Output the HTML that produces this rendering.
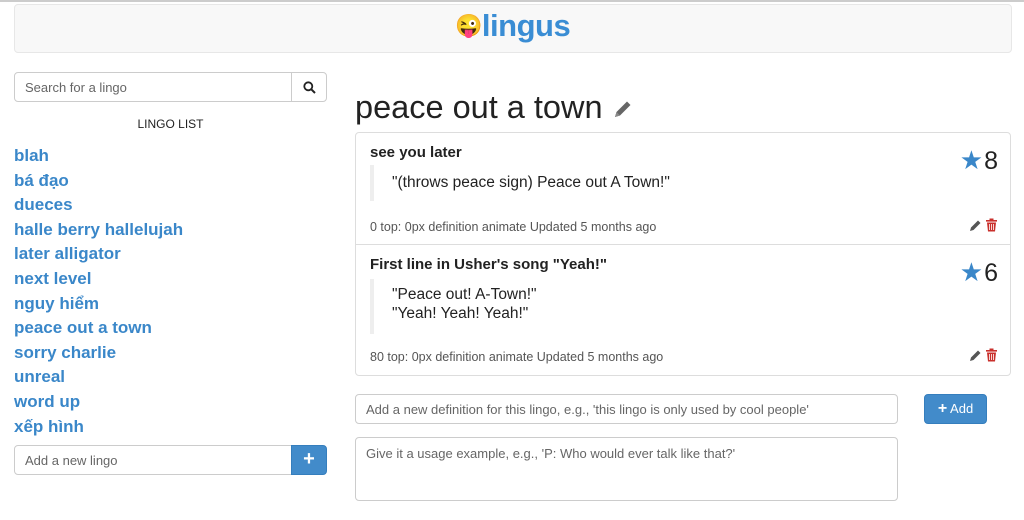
<!DOCTYPE html>
<html><head><meta charset="utf-8"><style>
*{box-sizing:border-box}
body{margin:0;width:1024px;height:520px;overflow:hidden;background:#fff;font-family:"Liberation Sans",sans-serif;color:#333;position:relative}
.abs{position:absolute}
.nav{left:14px;top:4px;width:998px;height:49px;background:#f8f8f8;border:1px solid #e7e7e7;border-radius:4px}
.logo{left:455px;top:8px;font-size:31px;font-weight:bold;color:#3a8dd4;letter-spacing:-0.5px}
.inp{border:1px solid #ccc;border-radius:4px;font-size:13px;color:#666;padding:0 10px;display:flex;align-items:center;background:#fff}
.list a{display:block;color:#3a87c9;font-weight:bold;font-size:17px;height:24.6px;line-height:24px;text-decoration:none}
.panel{left:355px;top:132px;width:656px;border:1px solid #ddd;border-radius:4px}
.item{position:relative;padding:0 14px;border-bottom:1px solid #ddd}
.item:last-child{border-bottom:0}
.h{font-size:15px;font-weight:bold;color:#222;position:absolute;left:14px;top:11px}
.bq{position:absolute;left:14px;border-left:4px solid #eee;padding-left:18px;font-size:15.5px;color:#222;line-height:19px}
.ft{position:absolute;left:14px;font-size:12.5px;color:#555}
.st{position:absolute;right:12px;font-size:25px;color:#222}
.st span{color:#3a87c9;font-size:26px;margin-right:1px}
.icons{position:absolute;right:12px}
</style></head><body>
<div class="abs" style="left:0;top:0;width:1024px;height:2px;background:#ccc"></div>
<div class="abs nav"></div>
<div class="abs logo"><span style="font-size:22px;vertical-align:3px">😜</span>lingus</div>

<div class="abs inp" style="left:14px;top:72px;width:278px;height:30px;border-radius:4px 0 0 4px">Search for a lingo</div>
<div class="abs inp" style="left:291px;top:72px;width:36px;height:30px;border-radius:0 4px 4px 0;justify-content:center">
<svg width="13" height="13" viewBox="0 0 13 13"><circle cx="5.3" cy="5.3" r="4" fill="none" stroke="#222" stroke-width="1.8"/><path d="M8.3 8.3L12 12" stroke="#222" stroke-width="2"/></svg></div>
<div class="abs" style="left:14px;top:117px;width:313px;text-align:center;font-size:12px;color:#222">LINGO LIST</div>
<div class="abs list" style="left:14px;top:144px">
<a>blah</a><a>bá đạo</a><a>dueces</a><a>halle berry hallelujah</a><a>later alligator</a><a>next level</a><a>nguy hiểm</a><a>peace out a town</a><a>sorry charlie</a><a>unreal</a><a>word up</a><a>xếp hình</a>
</div>
<div class="abs inp" style="left:14px;top:445px;width:278px;height:30px;border-radius:4px 0 0 4px">Add a new lingo</div>
<div class="abs" style="left:291px;top:445px;width:36px;height:30px;background:#428bca;border:1px solid #357ebd;border-radius:0 4px 4px 0;color:#fff;font-weight:bold;font-size:20px;text-align:center;line-height:27px">+</div>

<div class="abs" style="left:355px;top:89px;font-size:32.5px;color:#222;white-space:nowrap">peace out a town <svg width="22" height="22" viewBox="0 0 22 22" style="vertical-align:-2px"><path d="M3 19l1.5-5L15 3.5l3.5 3.5L8 17.5z" fill="#666"/><path d="M3 19l1.5-5 3.5 3.5z" fill="#888"/></svg></div>

<div class="abs panel">
<div class="item" style="height:112px">
<div class="h">see you later</div>
<div class="bq" style="top:32px;height:36px;padding-top:8px">"(throws peace sign) Peace out A Town!"</div>
<div class="st" style="top:12px"><span>★</span>8</div>
<div class="ft" style="top:87px">0 top: 0px definition animate Updated 5 months ago</div>
<div class="icons" style="top:85px"><svg width="30" height="14" viewBox="0 0 30 14"><path d="M2 13l1-3.5L10 2.5l2.5 2.5L5.5 12z" fill="#555"/><rect x="18" y="2" width="11" height="1.6" fill="#c9302c"/><rect x="21.5" y="0.5" width="4" height="2" fill="#c9302c"/><path d="M19 4.5h9l-1 9h-7z" fill="#c9302c"/><path d="M21.5 6v6M23.5 6v6M25.5 6v6" stroke="#fff" stroke-width="0.8"/></svg></div>
</div>
<div class="item" style="height:130px">
<div class="h">First line in Usher's song "Yeah!"</div>
<div class="bq" style="top:34px;height:55px;padding-top:6px">"Peace out! A-Town!"<br>"Yeah! Yeah! Yeah!"</div>
<div class="st" style="top:12px"><span>★</span>6</div>
<div class="ft" style="top:105px">80 top: 0px definition animate Updated 5 months ago</div>
<div class="icons" style="top:103px"><svg width="30" height="14" viewBox="0 0 30 14"><path d="M2 13l1-3.5L10 2.5l2.5 2.5L5.5 12z" fill="#555"/><rect x="18" y="2" width="11" height="1.6" fill="#c9302c"/><rect x="21.5" y="0.5" width="4" height="2" fill="#c9302c"/><path d="M19 4.5h9l-1 9h-7z" fill="#c9302c"/><path d="M21.5 6v6M23.5 6v6M25.5 6v6" stroke="#fff" stroke-width="0.8"/></svg></div>
</div>
</div>

<div class="abs inp" style="left:355px;top:394px;width:543px;height:30px">Add a new definition for this lingo, e.g., 'this lingo is only used by cool people'</div>
<div class="abs" style="left:924px;top:394px;width:63px;height:30px;background:#428bca;border:1px solid #357ebd;border-radius:4px;color:#fff;font-size:13px;text-align:center;line-height:28px"><b style="font-size:16px">+</b> Add</div>
<div class="abs inp" style="left:355px;top:437px;width:543px;height:64px;align-items:flex-start;padding-top:8px">Give it a usage example, e.g., 'P: Who would ever talk like that?'</div>
</body></html>
